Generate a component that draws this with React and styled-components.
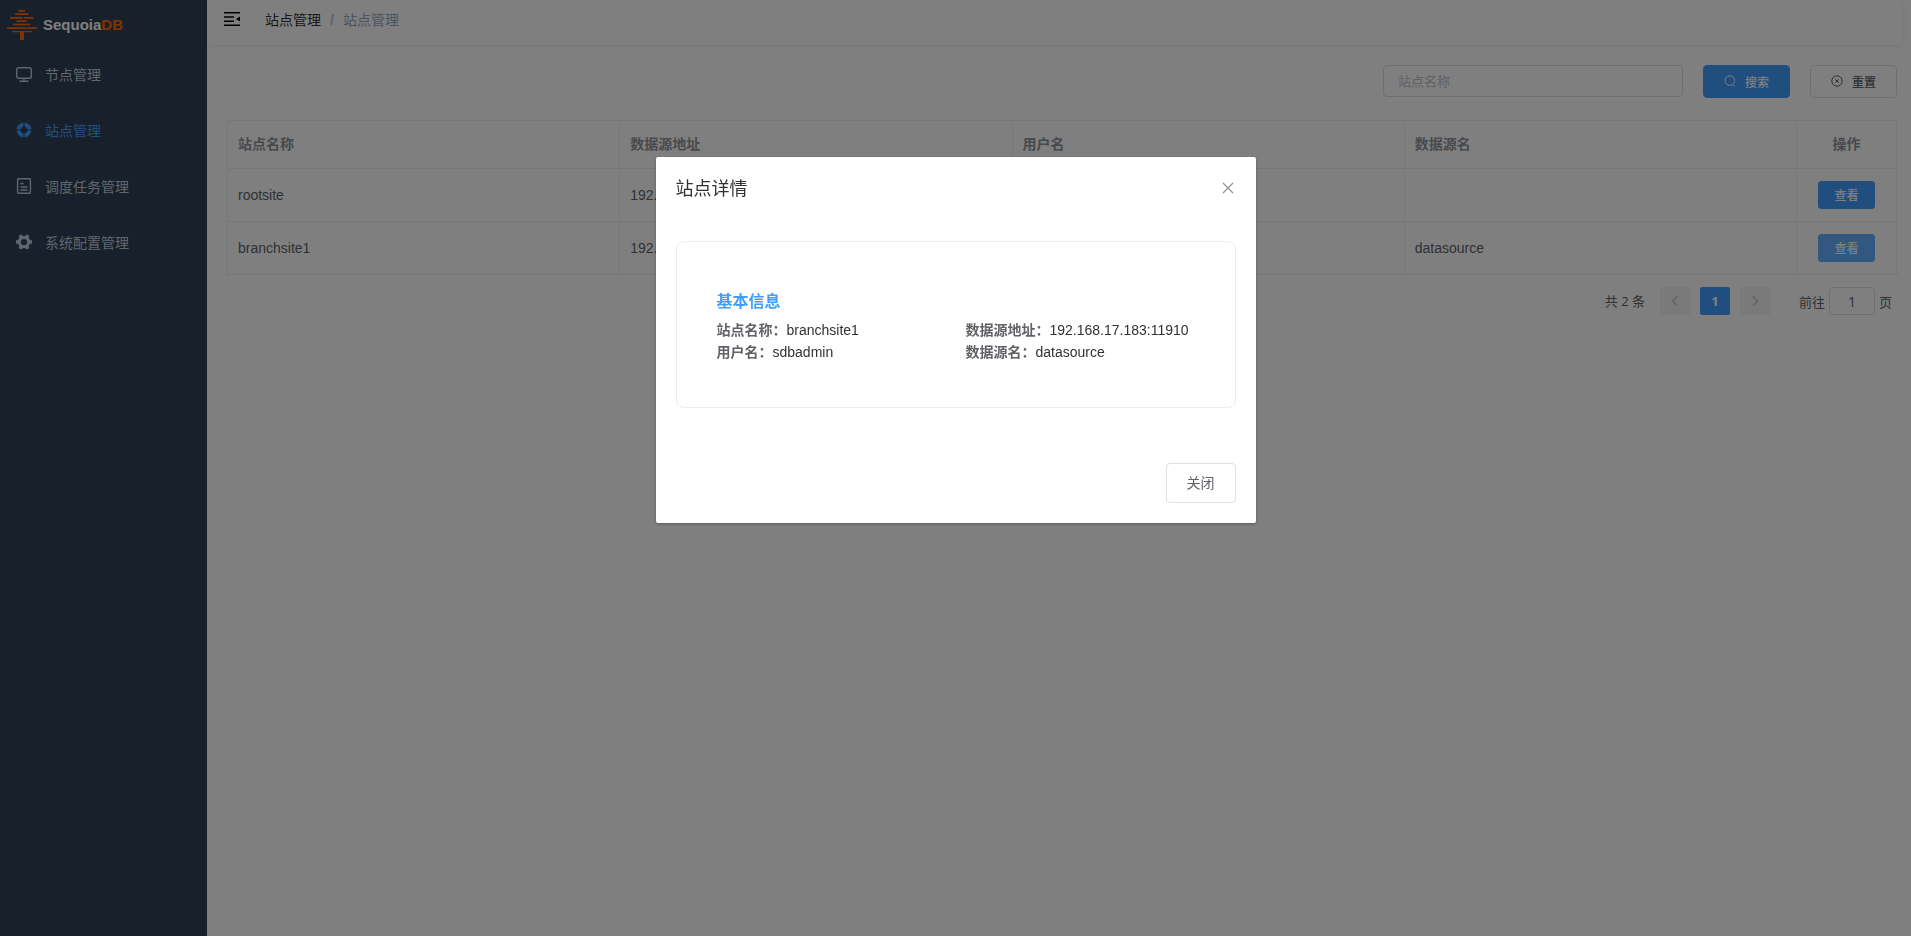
import React from 'react';
import styled, { createGlobalStyle, css } from 'styled-components';

const GlobalStyle = createGlobalStyle`
  * {
    box-sizing: border-box;
  }
  body {
    margin: 0;
    background: #fff;
    color: #606266;
    font-size: 14px;
    font-family: 'Liberation Sans', Arial, 'Noto Sans CJK SC', sans-serif;
  }
  button, input {
    font-family: inherit;
  }
`;

const Page = styled.div`
  display: flex;
  min-height: 100vh;
`;

const Sidebar = styled.aside`
  flex: 0 0 207px;
  background: #304156;
`;

const Logo = styled.a`
  display: flex;
  align-items: center;
  gap: 6px;
  height: 46px;
  padding: 3px 7px 0;
  color: #fff;
  font-size: 15px;
  font-weight: 700;
  text-decoration: none;

  & em {
    color: #ff6600;
    font-style: normal;
  }
`;

const MenuLink = styled.a`
  display: flex;
  align-items: center;
  gap: 13px;
  height: 56px;
  padding: 0 16px;
  color: ${({ $active }) => ($active ? '#409eff' : '#bfcbd9')};
  text-decoration: none;
`;

const Main = styled.main`
  flex: 1;
  min-width: 0;
  padding-right: 8px;
`;

const Header = styled.header`
  display: flex;
  align-items: center;
  gap: 25px;
  height: 45px;
  padding: 0 17px 7px;
  box-shadow: 0 1px 4px rgba(0, 21, 41, 0.08);
`;

const IconButton = styled.button`
  display: flex;
  padding: 0;
  border: 0;
  background: none;
  color: ${({ $color }) => $color || '#000'};
`;

const Breadcrumb = styled.nav`
  display: flex;
  align-items: baseline;
  gap: 9px;
  color: #97a8be;

  & a {
    color: #303133;
    text-decoration: none;
  }
  & i {
    color: #c0c4cc;
    font-style: normal;
    font-weight: 700;
  }
`;

const Content = styled.div`
  padding: 20px 6px 20px 20px;
`;

const Toolbar = styled.form`
  display: flex;
  justify-content: flex-end;
  align-items: flex-start;
  gap: 20px;
  margin-bottom: 22px;
`;

const field = css`
  border: 1px solid #dcdfe6;
  border-radius: 4px;
  background: #fff;
  color: #606266;
  outline: none;
`;

const SearchInput = styled.input`
  ${field}
  width: 300px;
  height: 32px;
  padding: 0 14px;
  font-size: 13px;

  &::placeholder {
    color: #c0c4cc;
  }
`;

const Button = styled.button`
  ${field}
  display: inline-flex;
  align-items: center;
  justify-content: center;
  gap: 9px;
  height: 33px;
  padding: 0 20px 1px;
  font-size: 12px;
  font-weight: 500;
  ${({ $primary }) =>
    $primary &&
    css`
      background: #409eff;
      border-color: #409eff;
      color: #fff;
    `}
  ${({ $size }) =>
    $size === 'mini' &&
    css`
      height: 28px;
      padding: 0 15px 1px;
      border-radius: 3px;
    `}
  ${({ $size }) =>
    $size === 'large' &&
    css`
      height: 40px;
      padding: 0 20px 2px;
      font-size: 14px;
      font-weight: 400;
    `}
  ${({ $hovered }) =>
    $hovered &&
    css`
      background: #66b1ff;
      border-color: #66b1ff;
    `}
`;

const Table = styled.table`
  width: 100%;
  table-layout: fixed;
  border-collapse: separate;
  border-spacing: 0;
  border: 1px solid #ebeef5;
  border-width: 1px 0 0 1px;

  & th,
  & td {
    padding: 12px 10px;
    border: 1px solid #ebeef5;
    border-width: 0 1px 1px 0;
    line-height: 23px;
    text-align: left;
  }
  & th {
    height: 48px;
    color: #909399;
    font-weight: 700;
  }
  & td {
    height: 53px;
    padding: 0 10px;
  }
  & th:last-child,
  & td:last-child {
    width: 100px;
    text-align: center;
  }
`;

const Pagination = styled.div`
  display: flex;
  justify-content: flex-end;
  align-items: center;
  gap: 10px;
  padding: 12px 5px 0;
  font-size: 13px;
  font-family: 'Open Sans', 'Noto Sans CJK SC', sans-serif;

  & > span {
    padding: 0 5px 2px 0;
  }
  & label {
    display: flex;
    align-items: center;
    gap: 4px;
    margin-left: 19px;
  }
`;

const Pager = styled.button`
  display: flex;
  align-items: center;
  justify-content: center;
  width: 30px;
  height: 28px;
  border: 0;
  border-radius: 2px;
  background: ${({ $current }) => ($current ? '#409eff' : '#f4f4f5')};
  color: ${({ $current }) => ($current ? '#fff' : '#c0c4cc')};
  font-size: 13px;
  font-weight: 700;
`;

const PageInput = styled.input`
  ${field}
  width: 46px;
  height: 28px;
  padding: 0 3px;
  font-size: 14px;
  text-align: center;
`;

const Overlay = styled.div`
  position: fixed;
  inset: 0;
  display: flex;
  justify-content: center;
  align-items: flex-start;
  padding-top: 157px;
  background: rgba(0, 0, 0, 0.5);
`;

const Dialog = styled.section`
  width: 600px;
  border-radius: 2px;
  background: #fff;
  box-shadow: 0 1px 3px rgba(0, 0, 0, 0.3);
`;

const DialogHeader = styled.div`
  display: flex;
  justify-content: space-between;
  align-items: center;
  padding: 20px 20px 10px;

  & h2 {
    margin: 0;
    color: #303133;
    font-size: 18px;
    font-weight: 400;
    line-height: 24px;
  }
`;

const DialogBody = styled.div`
  padding: 30px 20px 45px;
`;

const DialogFooter = styled.div`
  padding: 10px 20px 20px;
  text-align: right;

  & button {
    vertical-align: top;
  }
`;

const Card = styled.div`
  min-height: 167px;
  padding: 48px 40px 40px;
  border: 1px solid #ebeef5;
  border-radius: 8px;

  & h3 {
    margin: 0 0 6px;
    color: #409eff;
    font-size: 16px;
    line-height: 23px;
  }
`;

const Details = styled.dl`
  display: grid;
  grid-template-columns: 1fr 1fr;
  column-gap: 20px;
  margin: 0;
  line-height: 22px;

  & div {
    display: flex;
  }
  & dt {
    font-weight: 700;
  }
  & dd {
    margin: 0;
    color: #303133;
  }
`;

const LogoMark = () => (
  <svg width="30" height="30" viewBox="0 0 90 90" fill="#ff6600">
    <path d="M34 0h20v5H34zM24 10h40v5H24zM9 21h37v5H9zM50 21h29v5H50zM29 31h30v5H29zM18 41h52v5H18zM0 52h57v5H0zM60 52h30v5H60zM15 63h60v4H15zM39 67h12v23H39z" />
  </svg>
);

const MonitorIcon = () => (
  <svg width="16" height="16" viewBox="0 0 16 16" fill="none" stroke="currentColor">
    <rect x=".7" y="1.7" width="14.6" height="10.6" rx="1.8" strokeWidth="1.4" />
    <path d="M8 12v3M3.5 15.2h9" strokeWidth="1.4" />
  </svg>
);

const HelpIcon = () => (
  <svg width="16" height="16" viewBox="64 64 896 896" fill="currentColor">
    <path d="M926.8 480H701.3A192.5 192.5 0 0 0 544 322.7V97.2A416 416 0 0 1 926.8 480zm0 64A416 416 0 0 1 544 926.8V701.3A192.5 192.5 0 0 0 701.3 544zM97.3 544h225.4A192.5 192.5 0 0 0 480 701.3v225.5A416 416 0 0 1 97.3 544zm0-64A416 416 0 0 1 480 97.2v225.5A192.5 192.5 0 0 0 322.7 480z" />
  </svg>
);

const DocumentIcon = () => (
  <svg width="16" height="16" viewBox="0 0 16 16" fill="none" stroke="currentColor">
    <rect x="1.6" y=".7" width="12.8" height="14.6" rx=".6" strokeWidth="1.4" />
    <path d="M4.5 5.5h3M4.5 9h7M4.5 12h7" strokeWidth="1.4" />
  </svg>
);

const GearIcon = () => (
  <svg width="16" height="16" viewBox="0 0 16 16" fill="none" stroke="currentColor">
    <circle cx="8" cy="8" r="4.7" strokeWidth="3.2" />
    {[0, 60, 120].map((angle) => (
      <path
        key={angle}
        d="M0 8h2.6M13.4 8H16"
        strokeWidth="3.4"
        transform={`rotate(${angle} 8 8)`}
      />
    ))}
  </svg>
);

const FoldIcon = () => (
  <svg width="16" height="14" viewBox="0 0 16 14" fill="currentColor">
    <path d="M0 0h16v1.5H0zM0 4.2h10v1.5H0zM0 8.4h10v1.5H0zM0 12.5h16V14H0zM16 4.6v4.8L11.8 7z" />
  </svg>
);

const SearchIcon = () => (
  <svg width="12" height="12" viewBox="0 0 12 12" fill="none" stroke="currentColor">
    <circle cx="5.8" cy="5.6" r="4.8" />
    <path d="M8.6 9.4l2 2" />
  </svg>
);

const ResetIcon = () => (
  <svg width="12" height="12" viewBox="0 0 12 12" fill="none" stroke="currentColor">
    <circle cx="6" cy="6" r="5.2" />
    <path d="M4.4 4.4l3.2 3.2M7.6 4.4L4.4 7.6" />
  </svg>
);

const CloseIcon = () => (
  <svg width="16" height="16" viewBox="0 0 16 16" fill="none" stroke="currentColor">
    <path d="M3 2l10 10M13 2L3 12" strokeWidth="1.2" />
  </svg>
);

const Chevron = ({ d }) => (
  <svg width="12" height="12" viewBox="0 0 12 12" fill="none" stroke="currentColor">
    <path d={d} strokeWidth="1.5" />
  </svg>
);

const menu = [
  { label: '节点管理', icon: MonitorIcon },
  { label: '站点管理', icon: HelpIcon, active: true },
  { label: '调度任务管理', icon: DocumentIcon },
  { label: '系统配置管理', icon: GearIcon },
];

const sites = [
  { name: 'rootsite', address: '192.168.17.183:11810', user: 'sdbadmin', source: '' },
  {
    name: 'branchsite1',
    address: '192.168.17.183:11910',
    user: 'sdbadmin',
    source: 'datasource',
    hovered: true,
  },
];

const details = [
  ['站点名称', 'branchsite1'],
  ['数据源地址', '192.168.17.183:11910'],
  ['用户名', 'sdbadmin'],
  ['数据源名', 'datasource'],
];

const App = () => (
  <React.Fragment>
    <GlobalStyle />
    <Page>
      <Sidebar>
        <Logo href="#">
          <LogoMark />
          <span>
            Sequoia<em>DB</em>
          </span>
        </Logo>
        <nav>
          {menu.map(({ label, icon: Icon, active }) => (
            <MenuLink key={label} href="#" $active={active}>
              <Icon />
              {label}
            </MenuLink>
          ))}
        </nav>
      </Sidebar>
      <Main>
        <Header>
          <IconButton type="button" aria-label="收起菜单">
            <FoldIcon />
          </IconButton>
          <Breadcrumb>
            <a href="#">站点管理</a>
            <i>/</i>
            <span>站点管理</span>
          </Breadcrumb>
        </Header>
        <Content>
          <Toolbar>
            <SearchInput aria-label="站点名称" placeholder="站点名称" />
            <Button type="button" $primary>
              <SearchIcon />
              搜索
            </Button>
            <Button type="reset">
              <ResetIcon />
              重置
            </Button>
          </Toolbar>
          <Table>
            <thead>
              <tr>
                <th>站点名称</th>
                <th>数据源地址</th>
                <th>用户名</th>
                <th>数据源名</th>
                <th>操作</th>
              </tr>
            </thead>
            <tbody>
              {sites.map((site) => (
                <tr key={site.name}>
                  <td>{site.name}</td>
                  <td>{site.address}</td>
                  <td>{site.user}</td>
                  <td>{site.source}</td>
                  <td>
                    <Button type="button" $primary $size="mini" $hovered={site.hovered}>
                      查看
                    </Button>
                  </td>
                </tr>
              ))}
            </tbody>
          </Table>
          <Pagination>
            <span>共 2 条</span>
            <Pager type="button" aria-label="上一页" disabled>
              <Chevron d="M8 1.5L3.5 6 8 10.5" />
            </Pager>
            <Pager type="button" $current>
              1
            </Pager>
            <Pager type="button" aria-label="下一页" disabled>
              <Chevron d="M4 1.5L8.5 6 4 10.5" />
            </Pager>
            <label>
              前往
              <PageInput defaultValue="1" />
              页
            </label>
          </Pagination>
        </Content>
      </Main>
    </Page>
    <Overlay>
      <Dialog role="dialog" aria-modal="true" aria-labelledby="dialog-title">
        <DialogHeader>
          <h2 id="dialog-title">站点详情</h2>
          <IconButton type="button" aria-label="关闭对话框" $color="#909399">
            <CloseIcon />
          </IconButton>
        </DialogHeader>
        <DialogBody>
          <Card>
            <h3>基本信息</h3>
            <Details>
              {details.map(([label, value]) => (
                <div key={label}>
                  <dt>{label}：</dt>
                  <dd>{value}</dd>
                </div>
              ))}
            </Details>
          </Card>
        </DialogBody>
        <DialogFooter>
          <Button type="button" $size="large">
            关闭
          </Button>
        </DialogFooter>
      </Dialog>
    </Overlay>
  </React.Fragment>
);

export default App;
